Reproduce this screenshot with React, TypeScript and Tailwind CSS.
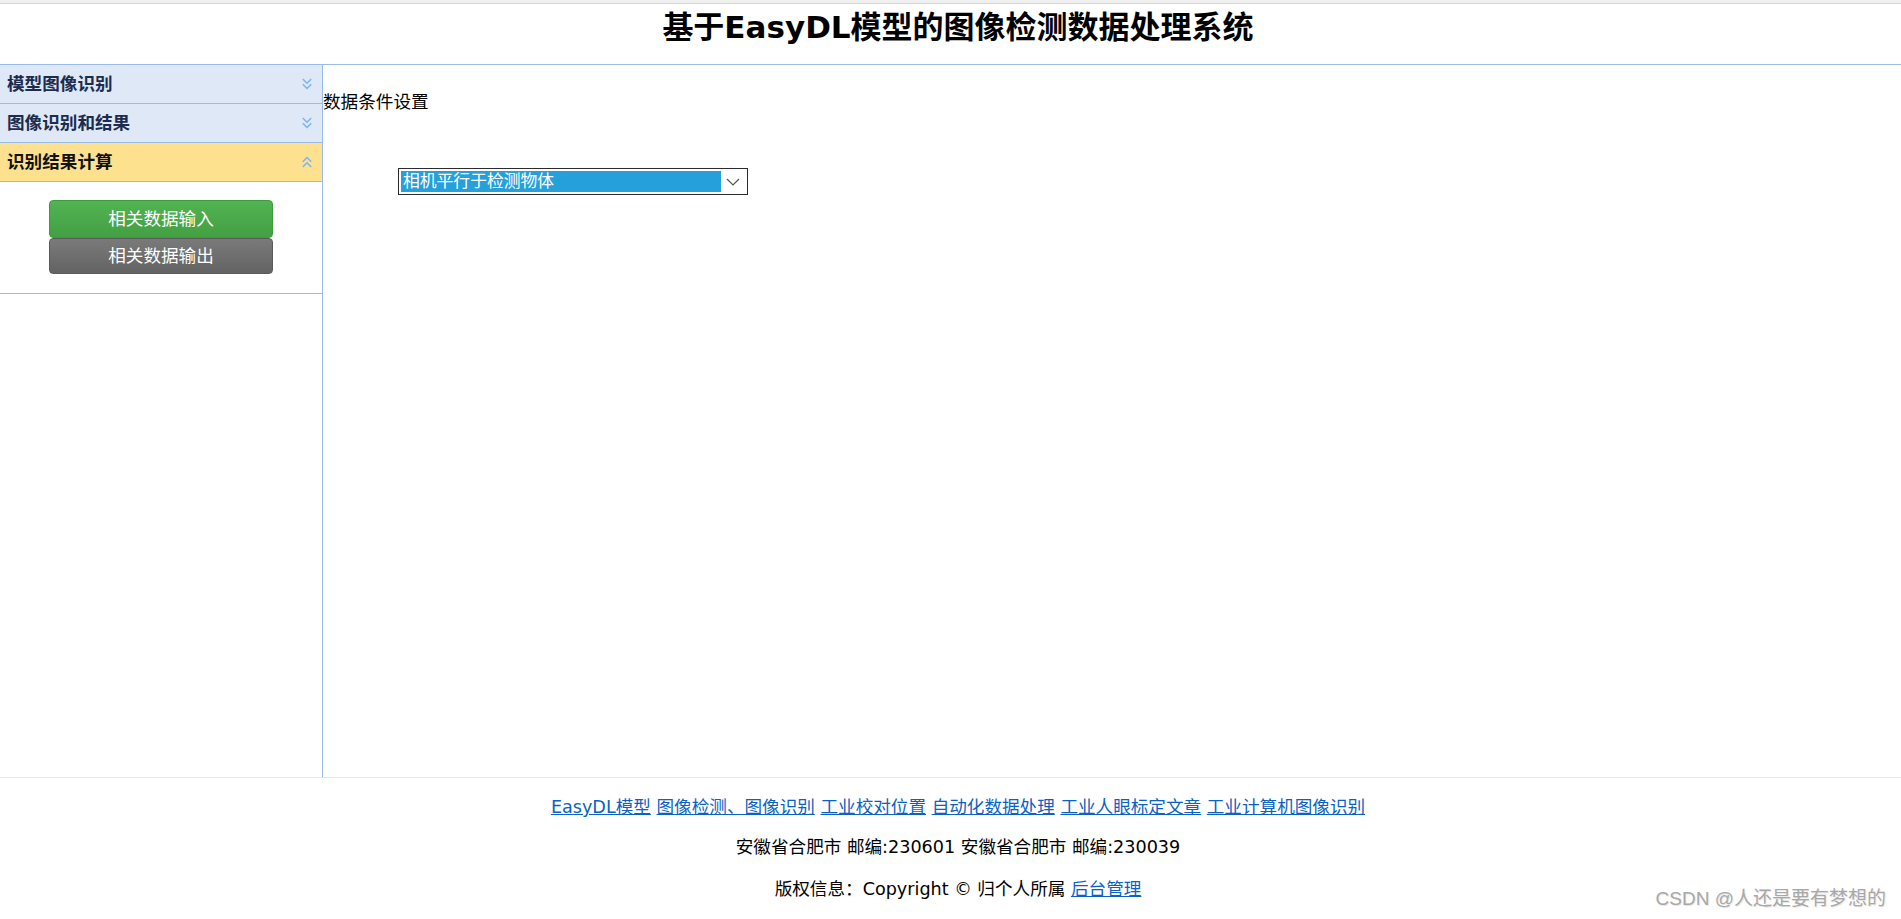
import React from 'react';
import { ChevronsDown, ChevronsUp } from 'lucide-react';

const CJK = '"DejaVu Sans", "Noto Sans CJK SC", sans-serif';

// Accordion header in the left nav
function NavItem({ label, open }: { label: string; open?: boolean }) {
  return (
    <div
      className={`h-[39px] flex items-center justify-between pl-[7px] pr-[6px] border-b border-[#99bbe8] ${
        open ? 'bg-[#fee18e] text-[#111]' : 'bg-[#dfe8f6] text-[#1b2c4f]'
      }`}
    >
      <span className="text-[17.6px] font-bold leading-[24px]">{label}</span>
      {open ? (
        <ChevronsUp size={18} className="text-[#7db8ee] stroke-[2.2]" />
      ) : (
        <ChevronsDown size={18} className="text-[#7db8ee] stroke-[2.2]" />
      )}
    </div>
  );
}

const links = [
  'EasyDL模型',
  '图像检测、图像识别',
  '工业校对位置',
  '自动化数据处理',
  '工业人眼标定文章',
  '工业计算机图像识别',
];

export default function App() {
  return (
    <div className="relative min-h-[919px] bg-white text-black" style={{ fontFamily: CJK }}>
      {/* header */}
      <div className="h-[65px] border-b border-[#99bbe8]">
        <div className="h-[4px] bg-[#f0f0f0] border-b border-[#d6d6d6]" />
        <h1 className="mt-[5px] pl-[15px] text-center text-[31px] font-bold leading-[36px]">
          基于EasyDL模型的图像检测数据处理系统
        </h1>
      </div>

      {/* body */}
      <div className="flex h-[712px]">
        <aside className="w-[323px] shrink-0 border-r border-[#99bbe8]">
          <NavItem label="模型图像识别" />
          <NavItem label="图像识别和结果" />
          <NavItem label="识别结果计算" open />
          <div className="border-b border-[#99bbe8] pt-[18px] pb-[19px] flex flex-col items-center">
            <button className="w-[224px] h-[38px] rounded-[4px] border border-[#3f9a3f] bg-gradient-to-b from-[#52b352] to-[#43a043] text-white text-[17.6px] leading-[24px]">
              相关数据输入
            </button>
            <button className="w-[224px] h-[36px] rounded-[4px] border border-[#5a5a5a] bg-gradient-to-b from-[#7a7a7a] to-[#636363] text-white text-[17.6px] leading-[24px]">
              相关数据输出
            </button>
          </div>
        </aside>

        <main className="flex-1 pt-[25px]">
          <p className="text-[17.6px] leading-[24px]">数据条件设置</p>
          <div className="ml-[75px] mt-[54px] w-[350px] h-[27px] border border-[#2b2b2b] p-[2px] flex">
            <div className="flex-1 bg-[#26a0da] text-white text-[16.8px] leading-[21px] pl-[2px]">
              相机平行于检测物体
            </div>
            <div className="w-[24px] flex items-center justify-center">
              <svg width="14" height="8" viewBox="0 0 14 8">
                <polyline points="1,1 7,7 13,1" fill="none" stroke="#555" strokeWidth="1.2" />
              </svg>
            </div>
          </div>
        </main>
      </div>

      {/* footer */}
      <footer className="border-t border-[#dde8f3] pl-[15px] flex flex-col items-center text-[17.6px] leading-[24px]">
        <div className="mt-[17px] flex gap-[5.6px]">
          {links.map(l => (
            <a key={l} href="#" className="text-[#0b62c4] underline">
              {l}
            </a>
          ))}
        </div>
        <p className="mt-[16px]">安徽省合肥市 邮编:230601 安徽省合肥市 邮编:230039</p>
        <p className="mt-[18px]">
          版权信息：Copyright © 归个人所属{' '}
          <a href="#" className="text-[#0b62c4] underline">
            后台管理
          </a>
        </p>
      </footer>

      {/* watermark */}
      <div
        className="absolute right-[15px] top-[887px] text-[19px] leading-[24px] text-[#a8a8a8] [text-shadow:1px_1px_1px_#e5e5e5]"
        style={{ fontFamily: '"Liberation Sans", "Noto Sans CJK SC", sans-serif' }}
      >
        CSDN @人还是要有梦想的
      </div>
    </div>
  );
}
